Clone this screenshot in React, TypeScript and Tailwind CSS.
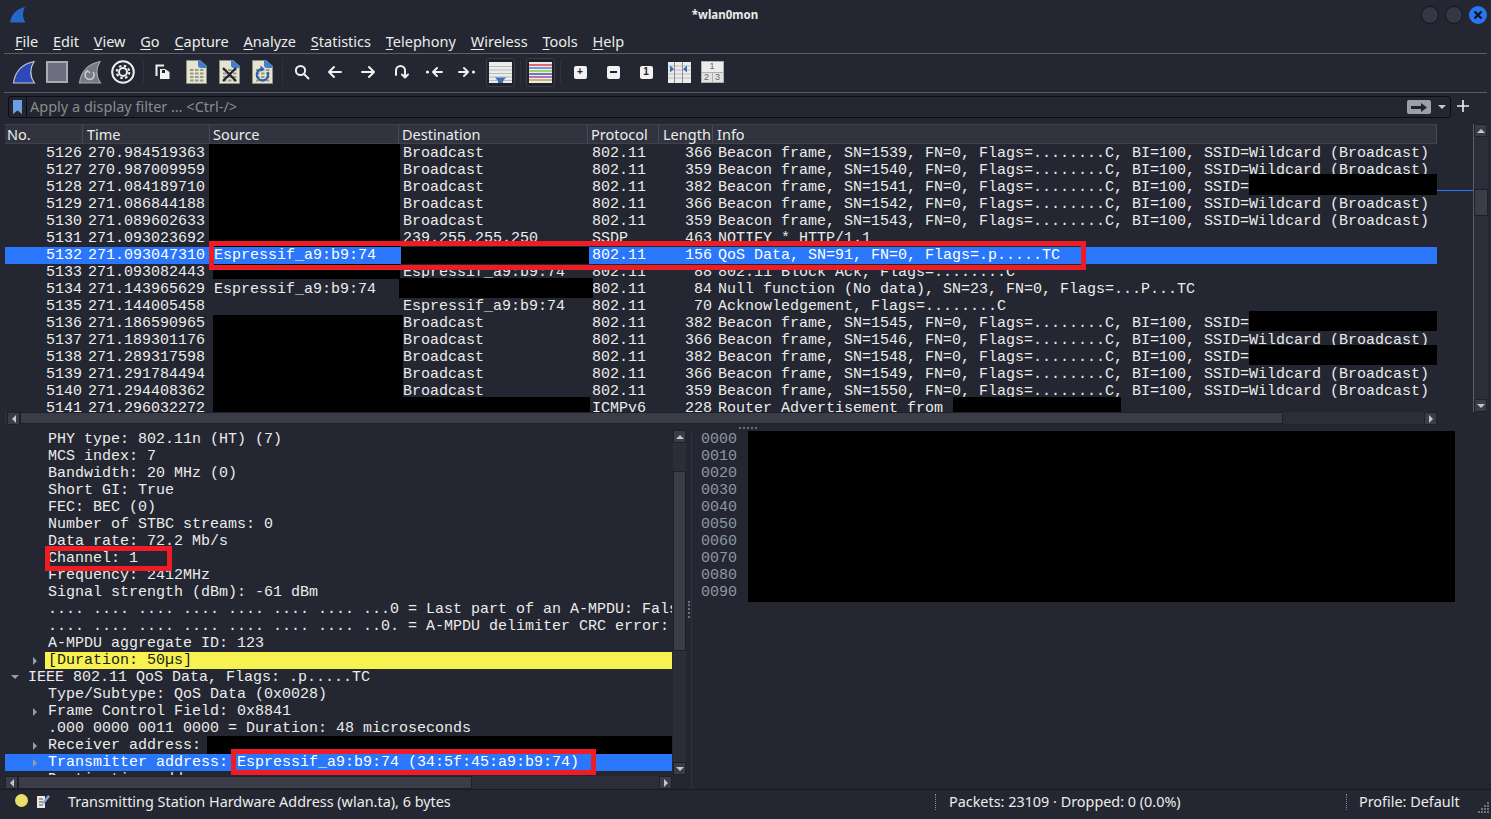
const mono = "font-['Liberation_Mono',monospace] text-[15px] leading-[17px]";

const menus = ['File', 'Edit', 'View', 'Go', 'Capture', 'Analyze', 'Statistics', 'Telephony', 'Wireless', 'Tools', 'Help'];

const beacon = (sn: number, ssid: string) => `Beacon frame, SN=${sn}, FN=0, Flags=........C, BI=100, SSID=${ssid}`;
const wild = 'Wildcard (Broadcast)';

const packets = [
  ['5126', '270.984519363', '', 'Broadcast', '802.11', '366', beacon(1539, wild)],
  ['5127', '270.987009959', '', 'Broadcast', '802.11', '359', beacon(1540, wild)],
  ['5128', '271.084189710', '', 'Broadcast', '802.11', '382', beacon(1541, '')],
  ['5129', '271.086844188', '', 'Broadcast', '802.11', '366', beacon(1542, wild)],
  ['5130', '271.089602633', '', 'Broadcast', '802.11', '359', beacon(1543, wild)],
  ['5131', '271.093023692', '', '239.255.255.250', 'SSDP', '463', 'NOTIFY * HTTP/1.1'],
  ['5132', '271.093047310', 'Espressif_a9:b9:74', '', '802.11', '156', 'QoS Data, SN=91, FN=0, Flags=.p.....TC'],
  ['5133', '271.093082443', '', 'Espressif_a9:b9:74', '802.11', '88', '802.11 Block Ack, Flags=........C'],
  ['5134', '271.143965629', 'Espressif_a9:b9:74', '', '802.11', '84', 'Null function (No data), SN=23, FN=0, Flags=...P...TC'],
  ['5135', '271.144005458', '', 'Espressif_a9:b9:74', '802.11', '70', 'Acknowledgement, Flags=........C'],
  ['5136', '271.186590965', '', 'Broadcast', '802.11', '382', beacon(1545, '')],
  ['5137', '271.189301176', '', 'Broadcast', '802.11', '366', beacon(1546, wild)],
  ['5138', '271.289317598', '', 'Broadcast', '802.11', '382', beacon(1548, '')],
  ['5139', '271.291784494', '', 'Broadcast', '802.11', '366', beacon(1549, wild)],
  ['5140', '271.294408362', '', 'Broadcast', '802.11', '359', beacon(1550, wild)],
  ['5141', '271.296032272', '', '', 'ICMPv6', '228', 'Router Advertisement from'],
];

const columns = 'grid grid-cols-[78px_127px_189px_189px_71px_54px_1fr]';

const headers = [
  { label: 'No.', pad: 'pl-[2px]' },
  { label: 'Time', pad: 'pl-[4px]' },
  { label: 'Source', pad: 'pl-[3px]' },
  { label: 'Destination', pad: 'pl-[3px]' },
  { label: 'Protocol', pad: 'pl-[3px]' },
  { label: 'Length', pad: 'pl-[4px]' },
  { label: 'Info', pad: 'pl-[4px]' },
];

const details: { text: string; indent?: boolean; arrow?: 'right' | 'down'; kind?: 'warn' | 'sel' }[] = [
  { text: 'PHY type: 802.11n (HT) (7)', indent: true },
  { text: 'MCS index: 7', indent: true },
  { text: 'Bandwidth: 20 MHz (0)', indent: true },
  { text: 'Short GI: True', indent: true },
  { text: 'FEC: BEC (0)', indent: true },
  { text: 'Number of STBC streams: 0', indent: true },
  { text: 'Data rate: 72.2 Mb/s', indent: true },
  { text: 'Channel: 1', indent: true },
  { text: 'Frequency: 2412MHz', indent: true },
  { text: 'Signal strength (dBm): -61 dBm', indent: true },
  { text: '.... .... .... .... .... .... .... ...0 = Last part of an A-MPDU: False', indent: true },
  { text: '.... .... .... .... .... .... .... ..0. = A-MPDU delimiter CRC error: False', indent: true },
  { text: 'A-MPDU aggregate ID: 123', indent: true },
  { text: '[Duration: 50µs]', indent: true, arrow: 'right', kind: 'warn' },
  { text: 'IEEE 802.11 QoS Data, Flags: .p.....TC', arrow: 'down' },
  { text: 'Type/Subtype: QoS Data (0x0028)', indent: true },
  { text: 'Frame Control Field: 0x8841', indent: true, arrow: 'right' },
  { text: '.000 0000 0011 0000 = Duration: 48 microseconds', indent: true },
  { text: 'Receiver address:', indent: true, arrow: 'right' },
  { text: 'Transmitter address: Espressif_a9:b9:74 (34:5f:45:a9:b9:74)', indent: true, arrow: 'right', kind: 'sel' },
  { text: 'Destination address:', indent: true, arrow: 'right' },
];

const offsets = ['0000', '0010', '0020', '0030', '0040', '0050', '0060', '0070', '0080', '0090'];

function Fin({ fill, size = 24 }: { fill: string; size?: number }) {
  return (
    <svg width={size} height={size} viewBox="0 0 24 24">
      <path d="M1.5 23C3 12 10 4 22 1.5 17.5 9 17.5 16 22.5 23Z" fill={fill} stroke="#c3c6ce" strokeWidth="1.2" />
    </svg>
  );
}

function Page({ children }: { children?: React.ReactNode }) {
  return (
    <svg width="21" height="24" viewBox="0 0 21 24">
      <path d="M.5.5H14L20.5 6V23.5H.5Z" fill="#e4e4cf" stroke="#8f9088" />
      <path d="M12 .5H14L20.5 6V8H15Q12 8 12 5Z" fill="#3f7fd0" />
      {children}
    </svg>
  );
}

function PageDots() {
  const dots = [];
  for (let r = 0; r < 4; r++) {
    for (let c = 0; c < 3; c++) {
      dots.push(<rect key={`${r}-${c}`} x={4 + c * 5} y={9 + r * 3.5} width="3.5" height="2" fill="#9a9a88" />);
    }
  }
  return <>{dots}</>;
}

function Arrow({ d }: { d: string }) {
  return (
    <svg width="20" height="20" viewBox="0 0 20 20" fill="none" stroke="#f0f0f0" strokeWidth="2" strokeLinecap="round" strokeLinejoin="round">
      <path d={d} />
    </svg>
  );
}

function Dot({ side }: { side: 'left' | 'right' }) {
  return (
    <svg width="20" height="20" viewBox="0 0 20 20" fill="none" stroke="#f0f0f0" strokeWidth="2" strokeLinecap="round" strokeLinejoin="round">
      {side === 'left' ? <path d="M18 10H9M13 6L9 10L13 14" /> : <path d="M2 10H11M7 6L11 10L7 14" />}
      <circle cx={side === 'left' ? 3.5 : 16.5} cy="10" r="1.6" fill="#f0f0f0" stroke="none" />
    </svg>
  );
}

function Glyph({ children }: { children: React.ReactNode }) {
  return (
    <span className="flex h-[13px] w-[13px] items-center justify-center rounded-[2px] bg-[#f2f2f2] text-[10px] font-bold leading-none text-[#20232c] font-['Liberation_Sans',sans-serif]">
      {children}
    </span>
  );
}

function Item({ children }: { children: React.ReactNode }) {
  return <div className="flex h-full w-[33px] shrink-0 items-center justify-center">{children}</div>;
}

function Sep() {
  return (
    <div className="flex h-full w-[7px] items-center justify-center">
      <div className="h-[24px] w-px bg-[#2e313c]" />
    </div>
  );
}

function Boxed({ children }: { children: React.ReactNode }) {
  return (
    <div className="flex h-full w-[33px] shrink-0 items-center justify-center">
      <div className="flex h-[29px] w-[29px] items-center justify-center rounded-[3px] border border-[#3b3e49] bg-[#1f222b]">{children}</div>
    </div>
  );
}

function Toolbar() {
  return (
    <div className="flex h-[38px] items-center pb-[2px] pl-[7.5px]">
      <Item><Fin fill="#2c49ba" /></Item>
      <Item>
        <div className="h-[22px] w-[22px] border-2 border-[#a9abb5] bg-[#6c6e7e]" />
      </Item>
      <Item>
        <svg width="24" height="24" viewBox="0 0 24 24" fill="none">
          <path d="M1.5 23C3 12 10 4 22 1.5 17.5 9 17.5 16 22.5 23Z" fill="#777985" stroke="#a5a7b0" strokeWidth="1.2" />
          <path d="M15 12A4.5 4.5 0 1 1 9.5 11" stroke="#c9cbd2" strokeWidth="1.6" />
          <path d="M7 13L9.5 10.5L12 13" stroke="#c9cbd2" strokeWidth="1.2" />
        </svg>
      </Item>
      <Item>
        <svg width="24" height="24" viewBox="0 0 24 24" fill="none" stroke="#eeeeee">
          <circle cx="12" cy="12" r="10.8" strokeWidth="2" />
          <circle cx="12" cy="12" r="4" strokeWidth="2" />
          <circle cx="12" cy="12" r="6.3" strokeWidth="2" strokeDasharray="2.6 2.35" />
        </svg>
      </Item>
      <Sep />
      <Item>
        <svg width="16" height="16" viewBox="0 0 16 16" fill="none">
          <path d="M1.5 12V1.5H9" stroke="#f2f2f2" strokeWidth="2" />
          <path d="M5 5H10L14.5 8V15H5Z" fill="#f2f2f2" />
          <path d="M7 6H10V9H7Z" fill="#20232c" />
        </svg>
      </Item>
      <Item><Page><PageDots /></Page></Item>
      <Item>
        <Page>
          <PageDots />
          <path d="M4 8L17 21M17 8L4 21" stroke="#23262f" strokeWidth="2.4" />
        </Page>
      </Item>
      <Item>
        <Page>
          <PageDots />
          <path d="M15.5 12A5.7 5.7 0 1 1 10.5 9" stroke="#2b5fae" strokeWidth="2.2" fill="none" />
          <path d="M8.5 5.5L12.5 9L8.5 12Z" fill="#2b5fae" />
        </Page>
      </Item>
      <Sep />
      <Item>
        <svg width="18" height="18" viewBox="0 0 18 18" fill="none" stroke="#f0f0f0" strokeWidth="2" strokeLinecap="round">
          <circle cx="7.5" cy="7.5" r="4.6" />
          <path d="M11 11L15.5 15.5" />
        </svg>
      </Item>
      <Item><Arrow d="M16 10H4M9 5L4 10L9 15" /></Item>
      <Item><Arrow d="M4 10H16M11 5L16 10L11 15" /></Item>
      <Item><Arrow d="M5 13V8.5A4.5 4.5 0 0 1 14 8.5V15M11 12.5L14 15.5L17 12.5" /></Item>
      <Item><Dot side="left" /></Item>
      <Item><Dot side="right" /></Item>
      <Boxed>
        <svg width="23" height="21" viewBox="0 0 23 21">
          <rect width="23" height="21" fill="#ececec" />
          <path d="M0 4.5H23M0 8H23M0 11.5H23M0 15H23M0 18.5H23" stroke="#b9b9b9" />
          <path d="M6 15.5H17L14 19V21H9V19Z" fill="#3a6fb5" />
        </svg>
      </Boxed>
      <Sep />
      <Boxed>
        <svg width="23" height="21" viewBox="0 0 23 21" strokeWidth="1.3">
          <rect width="23" height="21" fill="#ececec" />
          <path d="M0 3H23" stroke="#d8262c" />
          <path d="M0 6H23" stroke="#3a6fd0" />
          <path d="M0 9H23" stroke="#6fd01f" />
          <path d="M0 12H23" stroke="#3a3a9f" />
          <path d="M0 15H23" stroke="#8d3aa8" />
          <path d="M0 18H23" stroke="#bd9a2a" />
        </svg>
      </Boxed>
      <Sep />
      <Item><Glyph>+</Glyph></Item>
      <Item>
        <span className="flex h-[13px] w-[13px] items-center justify-center rounded-[2px] bg-[#f2f2f2]">
          <span className="h-[2px] w-[7px] bg-[#20232c]" />
        </span>
      </Item>
      <Item><Glyph>1</Glyph></Item>
      <Item>
        <svg width="23" height="21" viewBox="0 0 23 21">
          <rect width="23" height="21" fill="#ececec" />
          <path d="M0 4H23M0 8H23M0 12H23M0 16H23" stroke="#bdbdbd" />
          <path d="M6.5 0V21M14.5 0V21" stroke="#8f8f8f" />
          <path d="M2 3.5L6 7L2 10.5ZM19 3.5L15 7L19 10.5Z" fill="#3a6fb5" />
        </svg>
      </Item>
      <Item>
        <div className="grid h-[22px] w-[23px] grid-cols-2 grid-rows-2 gap-px border border-[#aeaeae] bg-[#aeaeae] text-[9px] leading-none text-[#666] font-['Liberation_Sans',sans-serif]">
          <div className="col-span-2 flex items-center justify-center bg-[#ececec]">1</div>
          <div className="flex items-center justify-center bg-[#e2e2e2]">2</div>
          <div className="flex items-center justify-center bg-[#e2e2e2]">3</div>
        </div>
      </Item>
    </div>
  );
}

function Tri({ dir, className = '' }: { dir: 'up' | 'down' | 'left' | 'right'; className?: string }) {
  const paths = { up: 'M1 7L5 3L9 7Z', down: 'M1 3L5 7L9 3Z', left: 'M7 1L3 5L7 9Z', right: 'M3 1L7 5L3 9Z' };
  return (
    <svg width="10" height="10" viewBox="0 0 10 10" className={className}>
      <path d={paths[dir]} fill="currentColor" />
    </svg>
  );
}

function ScrollBtn({ dir }: { dir: 'up' | 'down' | 'left' | 'right' }) {
  return (
    <div className="flex h-[13px] w-[13px] shrink-0 items-center justify-center border border-[#1d2028] bg-[#3a3d48] text-[#c4c6cc]">
      <Tri dir={dir} />
    </div>
  );
}

function App() {
  return (
    <div className="flex h-[819px] w-[1491px] flex-col overflow-hidden bg-[#242731] text-[#ececec] font-['Noto_Sans',sans-serif]">
      {/* title bar */}
      <div className="relative flex h-[30px] items-center justify-center pr-[41px]">
        <div className="absolute left-[10px] top-[7px]">
          <svg width="16" height="16" viewBox="0 0 16 16">
            <path d="M0 15.5C1 8 6 2 15 0 12.5 5 12 10 15.5 15.5Z" fill="#2468c8" />
          </svg>
        </div>
        <span className="text-[11.5px] font-bold">*wlan0mon</span>
        <div className="absolute right-[4px] top-[6px] flex gap-[6px]">
          <div className="h-[18px] w-[18px] rounded-full border border-[#14161c] bg-[#343844]" />
          <div className="h-[18px] w-[18px] rounded-full border border-[#14161c] bg-[#343844]" />
          <div className="flex h-[18px] w-[18px] items-center justify-center rounded-full bg-[#2a75f3]">
            <svg width="10" height="10" viewBox="0 0 10 10" stroke="#10131a" strokeWidth="2.2">
              <path d="M1.5 1.5L8.5 8.5M8.5 1.5L1.5 8.5" />
            </svg>
          </div>
        </div>
      </div>

      {/* menu */}
      <div className="flex h-[23px] items-center gap-[14.8px] pl-[15px] text-[14.5px] leading-[23px]">
        {menus.map((m) => (
          <span key={m}>
            <span className="underline underline-offset-2 decoration-1">{m[0]}</span>
            {m.slice(1)}
          </span>
        ))}
      </div>
      <div className="mx-[4px] h-px bg-[#5b5d66]" />

      <Toolbar />
      <div className="mx-[4px] h-px bg-[#5b5d66]" />

      {/* display filter */}
      <div className="flex h-[31px] items-start pl-[8px] pt-[3px]">
        <div className="flex h-[22px] w-[1443px] items-center rounded-[3px] border border-[#0c0d12] bg-[#232630]">
          <div className="flex h-full w-[18px] items-center justify-center border-r border-[#0c0d12]">
            <svg width="9" height="14" viewBox="0 0 9 14">
              <path d="M0 0H9V14L4.5 10.5L0 14Z" fill="#6d9fe0" />
            </svg>
          </div>
          <span className="ml-[3px] flex-1 text-[14.5px] text-[#8b8b8b]">Apply a display filter … &lt;Ctrl-/&gt;</span>
          <div className="flex h-[14px] w-[24px] items-center justify-center rounded-[2px] bg-[#9d9ea8]">
            <svg width="16" height="9" viewBox="0 0 16 9">
              <path d="M0 3H10V0L16 4.5L10 9V6H0Z" fill="#22252e" />
            </svg>
          </div>
          <Tri dir="down" className="ml-[6px] mr-[3px] text-[#c8c8c8]" />
        </div>
        <svg width="14" height="14" viewBox="0 0 14 14" className="ml-[5px] mt-[3px]" stroke="#f0f0f0" strokeWidth="1.6">
          <path d="M7 1V13M1 7H13" />
        </svg>
      </div>

      {/* packet list */}
      <div className="flex h-[300px] pl-[5px]">
        <div className="relative flex w-[1432px] flex-col">
          <div className={`${columns} h-[20px] border-y border-[#3e414c] bg-[#31343f] text-[14.5px] leading-[18px]`}>
            {headers.map((h) => (
              <div key={h.label} className={`h-full border-r border-[#484b56] ${h.pad}`}>{h.label}</div>
            ))}
          </div>
          <div className={`h-[268px] overflow-hidden pt-px ${mono}`}>
            {packets.map((p) => (
              <div key={p[0]} className={`${columns} h-[17px] whitespace-pre ${p[0] === '5132' ? 'bg-[#2a77fb] text-white' : ''}`}>
                <div className="pr-px text-right">{p[0]}</div>
                <div className="pr-[5px] text-right">{p[1]}</div>
                <div className="pl-[4px]">{p[2]}</div>
                <div className="pl-[4px]">{p[3]}</div>
                <div className="pl-[4px]">{p[4]}</div>
                <div className="pr-px text-right">{p[5]}</div>
                <div className="pl-[5px]">{p[6]}</div>
              </div>
            ))}
          </div>
          <div className="flex h-[12px] items-stretch bg-[#2b2e38] pl-[2px]">
            <ScrollBtn dir="left" />
            <div className="w-[1263px] border border-[#1d2028] bg-[#3a3d48]" />
            <div className="flex-1" />
            <ScrollBtn dir="right" />
          </div>

          {/* redactions and annotation drawn over the list */}
          <div className="absolute left-[204px] top-[20px] h-[103px] w-[191px] bg-black" />
          <div className="absolute left-[396px] top-[123px] h-[17px] w-[188px] bg-black" />
          <div className="absolute left-[208px] top-[140px] h-[15px] w-[187px] bg-black" />
          <div className="absolute left-[394px] top-[154px] h-[20px] w-[194px] bg-black" />
          <div className="absolute left-[208px] top-[191px] h-[97px] w-[190px] bg-black" />
          <div className="absolute left-[395px] top-[273px] h-[15px] w-[190px] bg-black" />
          <div className="absolute left-[1244px] top-[50px] h-[21px] w-[188px] bg-black" />
          <div className="absolute left-[1244px] top-[187px] h-[20px] w-[188px] bg-black" />
          <div className="absolute left-[1244px] top-[221px] h-[20px] w-[188px] bg-black" />
          <div className="absolute left-[948px] top-[273px] h-[15px] w-[168px] bg-black" />
          <div className="absolute left-[204px] top-[117px] h-[29px] w-[877px] border-[5px] border-[#ee1c25]" />
        </div>
        {/* packet minimap */}
        <div className="h-[288px] w-[37px] border-r border-[#5a5d67] pt-[66px]">
          <div className="h-px bg-[#2a77fb]" />
        </div>
        <div className="flex h-[288px] w-[14px] flex-col bg-[#2b2e38]">
          <ScrollBtn dir="up" />
          <div className="h-[52px]" />
          <div className="h-[27px] border border-[#1d2028] bg-[#3a3d48]" />
          <div className="flex-1" />
          <ScrollBtn dir="down" />
        </div>
      </div>

      {/* splitter */}
      <div className="flex h-[6px] justify-center pl-[5px] pt-[3px]">
        <div className="h-[2px] w-[18px] border-t-2 border-dotted border-[#6d7078]" />
      </div>

      {/* bottom panes */}
      <div className="flex h-[359px]">
        <div className="flex w-[686px] flex-col pl-[5px]">
          <div className="flex h-[345px]">
            <div className={`relative h-full w-[667px] overflow-hidden pt-px ${mono}`}>
              {details.map((d) => (
                <div
                  key={d.text}
                  className={`relative h-[17px] whitespace-pre ${d.indent ? 'pl-[43px]' : 'pl-[23px]'} ${d.kind === 'sel' ? 'bg-[#2a77fb] text-white' : ''}`}
                >
                  {d.kind === 'warn' && <div className="absolute bottom-0 left-[40px] right-0 top-0 bg-[#f7f250]" />}
                  {d.arrow === 'right' && <Tri dir="right" className="absolute left-[25px] top-[4px] text-[#9a9ca3]" />}
                  {d.arrow === 'down' && <Tri dir="down" className="absolute left-[5px] top-[3px] text-[#9a9ca3]" />}
                  <span className={d.kind === 'warn' ? 'relative text-[#1b1b1b]' : ''}>{d.text}</span>
                </div>
              ))}
              <div className="absolute left-[202px] top-[306px] h-[18px] w-[465px] bg-black" />
              <div className="absolute left-[40px] top-[116px] h-[25px] w-[127px] border-[5px] border-[#ee1c25]" />
              <div className="absolute left-[226px] top-[319px] h-[26px] w-[365px] border-[5px] border-[#ee1c25]" />
            </div>
            <div className="ml-px flex h-full w-[13px] flex-col bg-[#2b2e38]">
              <ScrollBtn dir="up" />
              <div className="h-[28px]" />
              <div className="h-[180px] border border-[#1d2028] bg-[#3a3d48]" />
              <div className="flex-1" />
              <ScrollBtn dir="down" />
            </div>
          </div>
          <div className="mt-px flex h-[13px] w-[667px] bg-[#2b2e38]">
            <ScrollBtn dir="left" />
            <div className="w-[454px] border border-[#1d2028] bg-[#3a3d48]" />
            <div className="flex-1" />
            <ScrollBtn dir="right" />
          </div>
        </div>
        <div className="flex w-[5px] items-center justify-center">
          <div className="h-[17px] w-[2px] border-l-2 border-dotted border-[#6d7078]" />
        </div>
        <div className="mr-px flex flex-1 border-l border-[#2e313c]">
          <div className={`w-[56px] pl-[9px] pt-px text-[#8e97a3] ${mono}`}>
            {offsets.map((o) => (
              <div key={o} className="h-[17px]">{o}</div>
            ))}
          </div>
          <div className="mt-px h-[171px] w-[707px] bg-black" />
        </div>
      </div>

      {/* status bar */}
      <div className="relative flex h-[30px] items-center border-t border-[#191b22] pb-[5px] text-[14.4px]">
        <div className="mb-[3px] ml-[15px] h-[13px] w-[13px] rounded-full bg-[#e8e06a]" />
        <svg width="14" height="15" viewBox="0 0 14 15" className="mb-[2px] ml-[8px]">
          <path d="M1 2H9V14H1Z" fill="#e8e8e8" />
          <path d="M3 5H7M3 8H7M3 11H7" stroke="#555" />
          <path d="M6 9L12 1L14 2.5L8 10Z" fill="#7fa8d8" />
        </svg>
        <span className="ml-[18px] w-[867px]">Transmitting Station Hardware Address (wlan.ta), 6 bytes</span>
        <div className="h-[16px] border-l border-dotted border-[#8a8c93]" />
        <span className="ml-[13px] w-[397px]">Packets: 23109 · Dropped: 0 (0.0%)</span>
        <div className="h-[16px] border-l border-dotted border-[#8a8c93]" />
        <span className="ml-[12px]">Profile: Default</span>
        <svg width="11" height="11" viewBox="0 0 11 11" className="absolute bottom-[6px] right-[2px]" fill="#70737c">
          <path d="M9 0h2v2H9zM6 3h2v2H6zM9 3h2v2H9zM3 6h2v2H3zM6 6h2v2H6zM9 6h2v2H9zM0 9h2v2H0zM3 9h2v2H3zM6 9h2v2H6zM9 9h2v2H9z" />
        </svg>
      </div>
    </div>
  );
}

export default App;
